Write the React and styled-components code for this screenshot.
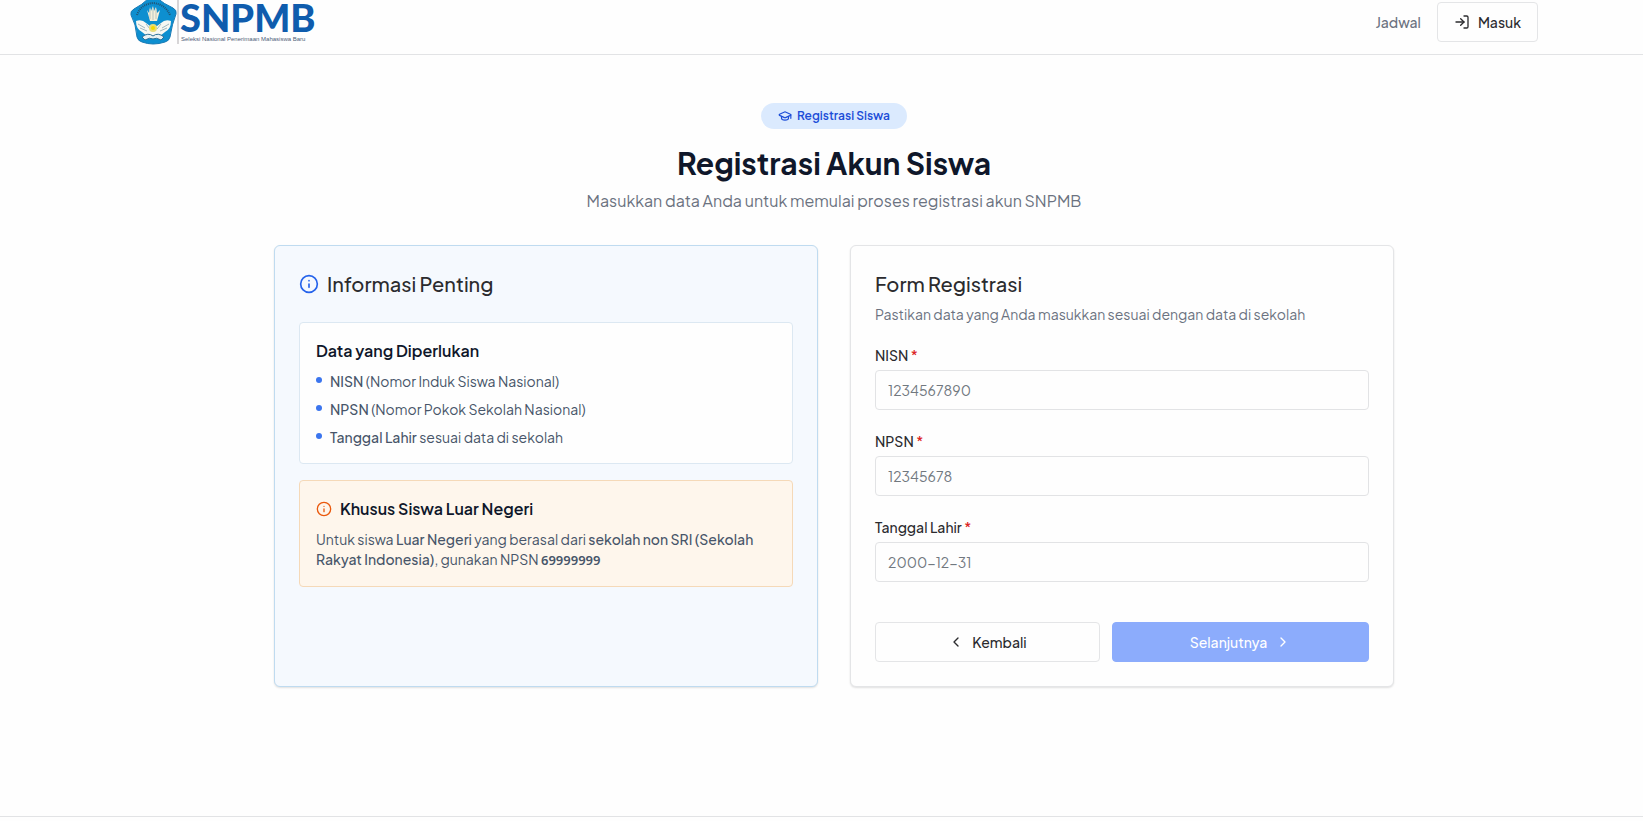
import styled, { createGlobalStyle } from "styled-components"
import { LogIn, GraduationCap, Info, ChevronLeft, ChevronRight } from "lucide-react"

const requiredData = [
  { term: "NISN", text: "(Nomor Induk Siswa Nasional)" },
  { term: "NPSN", text: "(Nomor Pokok Sekolah Nasional)" },
  { term: "Tanggal Lahir", text: "sesuai data di sekolah" },
]

const fields = [
  { id: "nisn", label: "NISN", placeholder: "1234567890" },
  { id: "npsn", label: "NPSN", placeholder: "12345678" },
  { id: "birth", label: "Tanggal Lahir", placeholder: "2000-12-31" },
]

function Logo() {
  return (
    <LogoSvg width="185" height="44" viewBox="0 0 185 44" role="img" aria-label="SNPMB">
      <path
        d="M19 -2 Q23 -4 27 -2 Q34 4 43 8 Q47 10 46 14 Q42 24 40 37 Q39 41 35 42 Q23 46 12 42 Q8 41 7 37 Q6 24 1 15 Q0 11 4 9 Q12 5 19 -2 Z"
        fill="#0d8fd0"
        stroke="#1779b4"
      />
      {/* motto ring */}
      <path d="M7 15 Q11 4 23 3 Q35 4 40 15" fill="none" stroke="#24506e" strokeWidth="2" strokeDasharray="1 1" />
      {/* tail feathers */}
      <path d="M17 10 L20 21 H27 L30 10 L27 13 L26 7 L24 11 L23 6 L21 11 L20 7 L19 13 Z" fill="#f6efd9" />
      <path d="M20 9 V19 M23 8 V20 M26 9 V19" stroke="#b7c6c3" strokeWidth="1" />
      {/* wings */}
      <path
        d="M6 21 Q12 19 16 23 L20 26 H27 L31 23 Q35 19 41 21 Q41 29 35 32 L30 36 H17 L12 32 Q6 29 6 21 Z"
        fill="#f7f8f3"
      />
      <path
        d="M8 24 L15 28 M10 28 L17 31 M39 24 L32 28 M37 28 L30 31 M16 24 L20 29 M31 24 L27 29"
        fill="none"
        stroke="#9fb8c0"
        strokeWidth="1"
      />
      <circle cx="23" cy="28" r="4" fill="#e9dc76" />
      <circle cx="23" cy="28" r="2" fill="#f5d800" />
      {/* book */}
      <path d="M12 37 Q18 32 23 36 Q28 32 34 37 L31 40 Q26 37 23 39 Q20 37 15 40 Z" fill="#eaf1f3" stroke="#2d6f96" strokeWidth="1" />
      <path d="M48 0 V44" stroke="#b0adb0" />
      <LogoName x="50" y="32">SNPMB</LogoName>
      <LogoTagline x="51" y="41">Seleksi Nasional Penerimaan Mahasiswa Baru</LogoTagline>
    </LogoSvg>
  )
}

export default function App() {
  return (
    <>
      <GlobalStyle />
      <Header>
        <HeaderContent>
          <LogoLink href="#">
            <Logo />
          </LogoLink>
          <Nav>
            <NavLink href="#">Jadwal</NavLink>
            <Button>
              <LogIn size={16} />
              Masuk
            </Button>
          </Nav>
        </HeaderContent>
      </Header>

      <Main>
        <Intro>
          <Badge>
            <GraduationCap size={14} />
            Registrasi Siswa
          </Badge>
          <h1>Registrasi Akun Siswa</h1>
          <p>Masukkan data Anda untuk memulai proses registrasi akun SNPMB</p>
        </Intro>

        <Columns>
          <Card $info>
            <CardTitle>
              <Info size={20} color="#2563eb" />
              Informasi Penting
            </CardTitle>
            <Notes>
              <Note>
                <NoteTitle>Data yang Diperlukan</NoteTitle>
                <DataList>
                  {requiredData.map(({ term, text }) => (
                    <li key={term}>
                      <strong>{term}</strong> {text}
                    </li>
                  ))}
                </DataList>
              </Note>
              <Note $warning>
                <NoteTitle>
                  <Info size={16} color="#ea580c" />
                  Khusus Siswa Luar Negeri
                </NoteTitle>
                <NoteText>
                  Untuk siswa <strong>Luar Negeri</strong> yang berasal dari{" "}
                  <strong>sekolah non SRI (Sekolah Rakyat Indonesia)</strong>, gunakan NPSN <Code>69999999</Code>
                </NoteText>
              </Note>
            </Notes>
          </Card>

          <Card>
            <CardTitle>Form Registrasi</CardTitle>
            <CardDescription>Pastikan data yang Anda masukkan sesuai dengan data di sekolah</CardDescription>
            <Form onSubmit={(e) => e.preventDefault()}>
              {fields.map(({ id, label, placeholder }) => (
                <Field key={id}>
                  <label htmlFor={id}>
                    {label} <span>*</span>
                  </label>
                  <input id={id} placeholder={placeholder} />
                </Field>
              ))}
              <Actions>
                <Button type="button">
                  <ChevronLeft size={16} />
                  Kembali
                </Button>
                <Button $primary disabled>
                  Selanjutnya
                  <ChevronRight size={16} />
                </Button>
              </Actions>
            </Form>
          </Card>
        </Columns>
      </Main>
      <Footer />
    </>
  )
}

const GlobalStyle = createGlobalStyle`
  * {
    box-sizing: border-box;
  }
  body {
    margin: 0;
    background-color: #fefefe;
    color: #2b2b2e;
    font-family: "Plus Jakarta Sans", Inter, sans-serif;
    font-size: 14px;
    line-height: 20px;
  }
  h1, h2, h3, p, ul {
    margin: 0;
    padding: 0;
  }
  button, input {
    font: inherit;
  }
  strong {
    font-weight: 500;
  }
`

const Header = styled.header`
  padding: 0 104px 0 129px;
  border-bottom: 1px solid #e2e3e5;
`

const HeaderContent = styled.div`
  max-width: 1408px;
  height: 54px;
  margin: 0 auto;
  padding: 2px 0 12px;
  display: flex;
  align-items: center;
  justify-content: space-between;
`

const LogoLink = styled.a`
  display: flex;
`

const LogoSvg = styled.svg`
  overflow: visible;
`

const LogoName = styled.text`
  font-family: Lato, sans-serif;
  font-size: 38px;
  font-weight: 900;
  fill: #0f5cad;
`

const LogoTagline = styled.text`
  font-family: "Liberation Sans", sans-serif;
  font-size: 6px;
  fill: #4d6078;
`

const Nav = styled.nav`
  display: flex;
  align-items: center;
  gap: 16px;
`

const NavLink = styled.a`
  color: #6b7280;
  font-weight: 500;
  text-decoration: none;
`

const Button = styled.button`
  height: 40px;
  padding: 0 16px;
  display: flex;
  align-items: center;
  justify-content: center;
  gap: 8px;
  border: 1px solid ${({ $primary }) => ($primary ? "#8cacfc" : "#e4e5e7")};
  border-radius: 4px;
  background-color: ${({ $primary }) => ($primary ? "#8cacfc" : "#fefefe")};
  color: ${({ $primary }) => ($primary ? "white" : "#2b2b2e")};
  font-weight: 500;
`

const Main = styled.main`
  padding: 48px 24px 48px 49px;
`

const Intro = styled.div`
  margin-bottom: 32px;
  display: flex;
  flex-direction: column;
  align-items: center;
  text-align: center;
  h1 {
    margin: 16px 0 8px;
    color: #0f172a;
    font-size: 30px;
    font-weight: 700;
    line-height: 36px;
  }
  p {
    color: #6b7280;
    font-size: 16px;
    line-height: 24px;
  }
`

const Badge = styled.div`
  height: 26px;
  padding: 0 17px;
  display: flex;
  align-items: center;
  gap: 5px;
  border-radius: 13px;
  background-color: #dbeafe;
  color: #1d4ed8;
  font-size: 12px;
  font-weight: 600;
`

const Columns = styled.div`
  max-width: 1120px;
  margin: 0 auto;
  display: grid;
  grid-template-columns: 1fr 1fr;
  gap: 32px;
`

const Card = styled.section`
  padding: 24px;
  border: 1px solid ${({ $info }) => ($info ? "#bfdbf0" : "#e4e5e7")};
  border-radius: 6px;
  background-color: ${({ $info }) => ($info ? "#f5f9fe" : "#fefefe")};
  box-shadow: 0 1px 2px rgba(0, 0, 0, 0.12);
`

const CardTitle = styled.h2`
  display: flex;
  align-items: center;
  gap: 8px;
  font-size: 20px;
  font-weight: 500;
  line-height: 28px;
`

const CardDescription = styled.p`
  margin-top: 6px;
  color: #6b7280;
`

const Notes = styled.div`
  margin-top: 24px;
  display: flex;
  flex-direction: column;
  gap: 16px;
`

const Note = styled.div`
  padding: 16px;
  border: 1px solid ${({ $warning }) => ($warning ? "#f5d9b8" : "#dce8f2")};
  border-radius: 4px;
  background-color: ${({ $warning }) => ($warning ? "#fef6ec" : "#fefefe")};
`

const NoteTitle = styled.h3`
  margin-bottom: 8px;
  display: flex;
  align-items: center;
  gap: 8px;
  color: #0f172a;
  font-size: 16px;
  font-weight: 600;
  line-height: 24px;
`

const DataList = styled.ul`
  display: flex;
  flex-direction: column;
  gap: 8px;
  color: #475569;
  list-style: none;
  li::before {
    content: "";
    width: 6px;
    height: 6px;
    margin-right: 8px;
    display: inline-block;
    border-radius: 50%;
    background-color: #3b75ee;
    vertical-align: 4px;
  }
`

const NoteText = styled.p`
  color: #475569;
`

const Code = styled.code`
  font-family: "Noto Sans", sans-serif;
  font-size: 13px;
  font-weight: 600;
`

const Form = styled.form`
  margin-top: 24px;
  display: flex;
  flex-direction: column;
  gap: 24px;
`

const Field = styled.div`
  display: flex;
  flex-direction: column;
  gap: 8px;
  label {
    font-weight: 500;
    line-height: 14px;
  }
  span {
    color: #dc2626;
  }
  input {
    width: 100%;
    height: 40px;
    padding: 0 12px;
    border: 1px solid #e2e3e5;
    border-radius: 4px;
    background-color: #fefefe;
    color: #2b2b2e;
  }
  input::placeholder {
    color: #71787f;
  }
`

const Actions = styled.div`
  margin-top: 16px;
  display: grid;
  grid-template-columns: 7fr 8fr;
  gap: 12px;
`

const Footer = styled.footer`
  margin-top: 81px;
  height: 4px;
  border-top: 1px solid #e2e3e5;
`
